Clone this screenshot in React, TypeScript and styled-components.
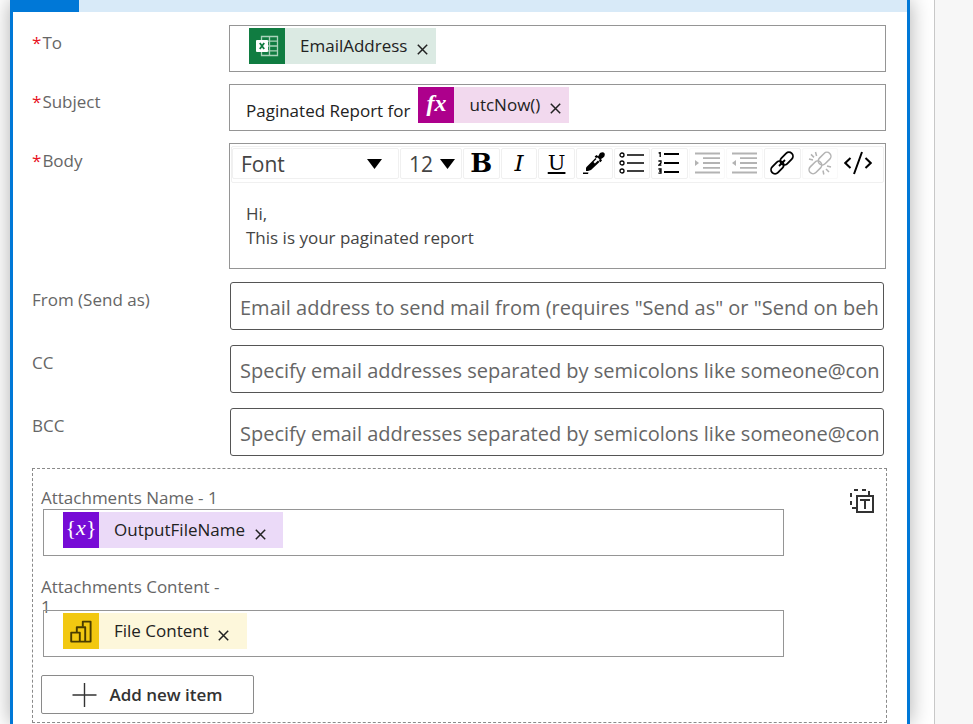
import React from "react";
import styled, { createGlobalStyle } from "styled-components";

const GlobalStyle = createGlobalStyle`
  *, *::before, *::after { box-sizing: border-box; }
  body {
    margin: 0;
    background: #ffffff;
    color: #333333;
    font-family: "Open Sans", "Noto Sans", sans-serif;
    font-size: 17px;
    line-height: 24px;
  }
  button, input, select { font: inherit; color: inherit; }
`;

const Page = styled.div`
  display: flex;
  min-height: 100vh;
  overflow: hidden;
`;

const Canvas = styled.main`
  flex: 1;
  min-width: 0;
  display: flex;
  padding: 0 24px 0 10px;
  overflow: hidden;
`;

const Gutter = styled.aside`
  width: 39px;
  flex-shrink: 0;
  background: #f7f7f7;
  border-left: 1px solid #c8c8c8;
`;

const Card = styled.form`
  flex: 1;
  min-width: 0;
  background: #ffffff;
  border: solid #0078d7;
  border-width: 0 3px;
  box-shadow: 0 0 20px rgba(0, 0, 0, 0.32);
`;

const CardHeader = styled.div`
  height: 12px;
  background: #d8eaf8;
`;

const HeaderAccent = styled.div`
  width: 66px;
  height: 100%;
  background: #0078d7;
`;

const CardBody = styled.div`
  display: flex;
  flex-direction: column;
  gap: 12px;
  padding: 13px 20px 0 19px;
`;

const Row = styled.div`
  display: grid;
  grid-template-columns: 197px minmax(0, 1fr);
  padding-right: 1px;
`;

const InputGroup = styled.div`
  display: flex;
  flex-direction: column;
  gap: 15px;
  padding: 1px 2px 0 0;
`;

const Label = styled.label`
  padding-top: 6px;
  color: #666666;
`;

const Required = styled.span`
  color: #e81123;
  margin-right: 1px;
`;

const TokenBox = styled.div`
  display: flex;
  align-items: flex-start;
  height: 47px;
  padding: 2px 16px;
  border: 1px solid #959595;
  background: #ffffff;
  color: #222222;
`;

const InlineText = styled.span`
  padding: 12px 5px 0 0;
  white-space: nowrap;
`;

const TokenPill = styled.span<{ $tint: string }>`
  display: inline-flex;
  align-items: center;
  height: 36px;
  margin-left: 3px;
  padding-right: 7px;
  background: ${(p) => p.$tint};
  white-space: nowrap;
`;

const TokenIcon = styled.span<{ $color: string }>`
  display: flex;
  align-items: center;
  justify-content: center;
  width: 36px;
  height: 36px;
  margin-right: 15px;
  background: ${(p) => p.$color};
  color: #ffffff;
`;

const IconText = styled.span<{ $bold?: boolean }>`
  font-family: "Liberation Serif", serif;
  font-style: italic;
  font-weight: ${(p) => (p.$bold ? 700 : 400)};
  font-size: ${(p) => (p.$bold ? 24 : 22)}px;
  line-height: 32px;
  padding-bottom: 4px;
`;

const Brace = styled.span`
  font-style: normal;
`;

const RemoveButton = styled.button`
  display: flex;
  align-items: center;
  justify-content: center;
  width: 14px;
  height: 14px;
  margin: 6px 0 0 8px;
  padding: 0;
  border: 0;
  background: none;
`;

const Editor = styled.div`
  height: 126px;
  padding: 2px 1px 0 1px;
  border: 1px solid #959595;
`;

const Toolbar = styled.div`
  display: flex;
  height: 37px;
  padding: 1px 7px 3px 0;
  border: 1px solid #f0f0f0;
  border-radius: 2px;
`;

const SelectWrap = styled.div<{ $width: number; $caretRight: number }>`
  position: relative;
  width: ${(p) => p.$width}px;
  margin-right: 1px;
  flex-shrink: 0;

  svg {
    position: absolute;
    right: ${(p) => p.$caretRight}px;
    top: 11px;
    pointer-events: none;
  }
`;

const Select = styled.select`
  appearance: none;
  width: 100%;
  height: 31px;
  padding: 0 0 0 8px;
  border: 1px solid #f0f0f0;
  border-radius: 2px;
  background: #ffffff;
  color: #444444;
  font-size: 21px;
  line-height: 28px;
`;

const ToolGrid = styled.div`
  flex: 1;
  display: grid;
  grid-template-columns: repeat(11, minmax(0, 1fr));
  column-gap: 1px;
`;

const Tool = styled.button<{ $plain?: boolean }>`
  display: flex;
  align-items: center;
  justify-content: center;
  height: 31px;
  padding: 0 0 2px;
  border: 1px solid ${(p) => (p.$plain ? "transparent" : "#f0f0f0")};
  border-radius: 2px;
  background: #ffffff;
  color: #000000;

  &:disabled {
    color: #b3b3b3;
    border-color: #f9f9f9;
  }
`;

const Glyph = styled.span<{ $kind: "bold" | "italic" | "underline" }>`
  font-family: "DejaVu Serif", serif;
  font-size: ${(p) => (p.$kind === "bold" ? 26 : p.$kind === "italic" ? 23 : 21)}px;
  line-height: 28px;
  font-weight: ${(p) => (p.$kind === "bold" ? 700 : 400)};
  font-style: ${(p) => (p.$kind === "italic" ? "italic" : "normal")};
  text-decoration: ${(p) => (p.$kind === "underline" ? "underline" : "none")};
`;

const EditorText = styled.div`
  padding: 19px 15px 0;
  color: #444444;

  p { margin: 0; }
`;

const TextInput = styled.input`
  width: 100%;
  height: 48px;
  padding: 3px 0 0 9px;
  border: 1px solid #555555;
  border-radius: 3px;
  background: #ffffff;
  font-size: 20px;

  &::placeholder { color: #666666; opacity: 1; }
`;

const InputCell = styled.div`
  padding-left: 1px;
`;

const Attachments = styled.section`
  display: grid;
  grid-template-columns: minmax(0, 743px) 1fr;
  padding: 19px 12px 8px 8px;
  border: 1px dashed #8a8a8a;
  color: #666666;
`;

const AttachmentFields = styled.div`
  display: flex;
  flex-direction: column;
  align-items: flex-start;
`;

const AttachmentField = styled.div<{ $labelHeight: number }>`
  display: grid;
  grid-template-rows: ${(p) => p.$labelHeight}px auto;
  width: 100%;

  & + & { margin-top: 21px; }

  ${TokenBox} {
    margin-left: 2px;
    background: transparent;
  }
  ${TokenPill} { padding-right: 16px; }
  ${RemoveButton} { margin-top: 9px; }
`;

const AttachmentLabel = styled.span`
  max-width: 190px;
  line-height: 20px;
`;

const AddButton = styled.button`
  display: flex;
  align-items: center;
  justify-content: center;
  gap: 12px;
  width: 213px;
  height: 39px;
  margin-top: 18px;
  padding: 1px 0 0;
  border: 1px solid #8a8a8a;
  border-radius: 2px;
  background: #ffffff;
  color: #333333;
  font-weight: 600;
`;

const ModeButton = styled.button`
  justify-self: end;
  align-self: start;
  display: flex;
  margin-top: 1px;
  padding: 0;
  border: 0;
  background: none;
`;

const Caret = () => (
  <svg width="15" height="10" viewBox="0 0 15 10" aria-hidden="true">
    <path d="M0 0H15L7.5 10Z" fill="#000" />
  </svg>
);

const ExcelIcon = () => (
  <svg width="24" height="22" viewBox="0 0 24 22" aria-hidden="true">
    <path
      d="M6.5 1.5H22.5V20.5H6.5ZM14.5 1.5V20.5M6.5 6.2H22.5M6.5 11H22.5M6.5 15.8H22.5"
      fill="none"
      stroke="#a9d3ba"
      strokeWidth="1.3"
    />
    <rect x="1" y="5" width="12" height="12" rx="1" fill="#fff" />
    <path d="M4.8 8L9.2 14M9.2 8L4.8 14" stroke="#107c41" strokeWidth="1.8" />
  </svg>
);

const PowerBiIcon = () => (
  <svg width="22" height="23" viewBox="0 0 22 23" aria-hidden="true">
    <g fill="none" stroke="#4a3c00" strokeWidth="1.9" strokeLinejoin="round">
      <path d="M12.8 6.8V1.6H20.6V21.6H1.2V12.6H9.8V21.6" />
      <path d="M6.8 12.6V7.2H15.2V21.6" />
    </g>
  </svg>
);

const Cross = () => (
  <svg width="11" height="11" viewBox="0 0 11 11" aria-hidden="true">
    <path d="M0.8 0.8L10.2 10.2M10.2 0.8L0.8 10.2" stroke="#222" strokeWidth="1.5" />
  </svg>
);

const PickerIcon = () => (
  <svg width="22" height="22" viewBox="0 0 22 22" aria-hidden="true">
    <path d="M0 22V20.4H5.5L5 22Z" fill="currentColor" />
    <path d="M3 19V15.5L12.5 6L16.5 10L8 18L5 19Z" fill="currentColor" />
    <path d="M11.2 10.8L15 7" stroke="#fff" strokeWidth="2" />
    <path d="M11.6 4.6L13.5 3L15.2 4.2L17 1Q20 -0.8 21.5 1.2Q22.5 3.8 20 5.8L18 7L19 8.6L17.4 10.2L16 9L16.6 7.4L14.6 5.4L13 6Z" fill="currentColor" />
  </svg>
);

const BulletsIcon = () => (
  <svg width="25" height="22" viewBox="0 0 25 22" aria-hidden="true">
    <g fill="none" stroke="currentColor" strokeWidth="1.3">
      <circle cx="3" cy="3" r="2" />
      <circle cx="3" cy="11" r="2" />
      <circle cx="3" cy="19" r="2" />
      <path d="M8 3H25M8 11H25M8 19H25" />
    </g>
  </svg>
);

const NumbersIcon = () => (
  <svg width="22" height="22" viewBox="0 0 22 22" aria-hidden="true">
    <path d="M6 2H21M6 11H21M6 20H21" stroke="currentColor" strokeWidth="2" />
    <g fill="none" stroke="currentColor" strokeWidth="1.3">
      <path d="M0.6 1.2L2.2 0.6V5" />
      <path d="M0.4 9H3V11L0.8 13.2H3.4" />
      <path d="M0.4 17H3V21.2H0.4M1 19H3" />
    </g>
  </svg>
);

const IndentIcon = ({ out }: { out?: boolean }) => (
  <svg width="25" height="22" viewBox="0 0 25 22" aria-hidden="true">
    <path d="M0 1.5H25M8 6.2H25M8 11H25M8 15.8H25M0 20.5H25" stroke="currentColor" strokeWidth="1.8" />
    <path d={out ? "M4 8V14L0 11Z" : "M0 8V14L4 11Z"} fill="currentColor" />
  </svg>
);

const LinkIcon = ({ broken }: { broken?: boolean }) => (
  <svg width="24" height="24" viewBox="0 0 24 24" aria-hidden="true">
    <g fill="none" stroke="currentColor" strokeWidth={broken ? 1.5 : 1.8}>
      <rect x="-7.3" y="-4" width="14.6" height="8" rx="4" transform="translate(16.6 7.6) rotate(-45)" />
      <rect x="-7.3" y="-4" width="14.6" height="8" rx="4" transform="translate(7.4 16.4) rotate(-45)" />
      {broken ? (
        <path d="M7.5 1L8.6 5M3 3.4L6 6.4M1 8L5 9M15 19.5L15.8 23.5M18 18L21 21M19 15L23 16" />
      ) : (
        <path d="M9 15L15 9" />
      )}
    </g>
  </svg>
);

const CodeIcon = () => (
  <svg width="28" height="24" viewBox="0 0 28 24" aria-hidden="true">
    <path
      d="M6.5 7L1.3 12L6.5 17M21.5 7L26.7 12L21.5 17M18 1L10 23"
      fill="none"
      stroke="currentColor"
      strokeWidth="2"
    />
  </svg>
);

const PlusIcon = () => (
  <svg width="25" height="24" viewBox="0 0 25 24" aria-hidden="true">
    <path d="M12.5 0V24M0.5 12H24.5" stroke="#333" strokeWidth="1.4" />
  </svg>
);

const ModeIcon = () => (
  <svg width="24" height="24" viewBox="0 0 24 24" aria-hidden="true">
    <path d="M4 0h4v2H4zM12 0h4v2h-4zM18 2h2v4h-2zM0 4h2v4H0zM0 12h2v4H0zM2 18h4v2H2z" fill="#333" />
    <path d="M10 10h10v2h-4v8h-2v-8h-4z" fill="#333" />
    <rect x="7" y="7" width="16" height="16" fill="none" stroke="#333" strokeWidth="2" />
  </svg>
);

interface TokenProps {
  name: string;
  color: string;
  tint: string;
  icon: React.ReactNode;
}

const Token = ({ name, color, tint, icon }: TokenProps) => (
  <TokenPill $tint={tint}>
    <TokenIcon $color={color}>{icon}</TokenIcon>
    {name}
    <RemoveButton type="button" aria-label={`Remove ${name}`}>
      <Cross />
    </RemoveButton>
  </TokenPill>
);

const VariableIcon = () => (
  <IconText>
    <Brace>{"{"}</Brace>x<Brace>{"}"}</Brace>
  </IconText>
);

const emailHint = "Specify email addresses separated by semicolons like someone@con";

const textFields = [
  { id: "from", label: "From (Send as)", hint: 'Email address to send mail from (requires "Send as" or "Send on beh' },
  { id: "cc", label: "CC", hint: emailHint },
  { id: "bcc", label: "BCC", hint: emailHint },
];

export default function App() {
  return (
    <>
      <GlobalStyle />
      <Page>
        <Canvas>
          <Card onSubmit={(e) => e.preventDefault()}>
            <CardHeader>
              <HeaderAccent />
            </CardHeader>
            <CardBody>
              <Row>
                <Label as="span" id="to-label">
                  <Required>*</Required>To
                </Label>
                <TokenBox role="textbox" aria-labelledby="to-label" tabIndex={0}>
                  <Token name="EmailAddress" color="#107c41" tint="#dbeae3" icon={<ExcelIcon />} />
                </TokenBox>
              </Row>
              <Row>
                <Label as="span" id="subject-label">
                  <Required>*</Required>Subject
                </Label>
                <TokenBox role="textbox" aria-labelledby="subject-label" tabIndex={0}>
                  <InlineText>Paginated Report for</InlineText>
                  <Token name="utcNow()" color="#ad008c" tint="#f2d9ee" icon={<IconText $bold>fx</IconText>} />
                </TokenBox>
              </Row>
              <Row>
                <Label as="span" id="body-label">
                  <Required>*</Required>Body
                </Label>
                <Editor>
                  <Toolbar role="toolbar" aria-label="Formatting">
                    <SelectWrap $width={167} $caretRight={17}>
                      <Select aria-label="Font family">
                        <option>Font</option>
                      </Select>
                      <Caret />
                    </SelectWrap>
                    <SelectWrap $width={62} $caretRight={7}>
                      <Select aria-label="Font size">
                        <option>12</option>
                      </Select>
                      <Caret />
                    </SelectWrap>
                    <ToolGrid>
                      <Tool type="button" aria-label="Bold"><Glyph $kind="bold">B</Glyph></Tool>
                      <Tool type="button" aria-label="Italic"><Glyph $kind="italic">I</Glyph></Tool>
                      <Tool type="button" aria-label="Underline"><Glyph $kind="underline">U</Glyph></Tool>
                      <Tool type="button" aria-label="Text color"><PickerIcon /></Tool>
                      <Tool type="button" aria-label="Bulleted list"><BulletsIcon /></Tool>
                      <Tool type="button" aria-label="Numbered list"><NumbersIcon /></Tool>
                      <Tool type="button" aria-label="Indent" disabled><IndentIcon /></Tool>
                      <Tool type="button" aria-label="Outdent" disabled><IndentIcon out /></Tool>
                      <Tool type="button" aria-label="Link"><LinkIcon /></Tool>
                      <Tool type="button" aria-label="Unlink" disabled><LinkIcon broken /></Tool>
                      <Tool type="button" aria-label="Code view" $plain><CodeIcon /></Tool>
                    </ToolGrid>
                  </Toolbar>
                  <EditorText role="textbox" aria-multiline="true" aria-labelledby="body-label" tabIndex={0}>
                    <p>Hi,</p>
                    <p>This is your paginated report</p>
                  </EditorText>
                </Editor>
              </Row>
              <InputGroup>
                {textFields.map((f) => (
                  <Row key={f.id}>
                    <Label htmlFor={f.id}>{f.label}</Label>
                    <InputCell>
                      <TextInput id={f.id} type="text" placeholder={f.hint} />
                    </InputCell>
                  </Row>
                ))}
              </InputGroup>
              <Attachments>
                <AttachmentFields>
                  <AttachmentField $labelHeight={21}>
                    <AttachmentLabel id="att-name">Attachments Name - 1</AttachmentLabel>
                    <TokenBox role="textbox" aria-labelledby="att-name" tabIndex={0}>
                      <Token name="OutputFileName" color="#770bd6" tint="#ebdaf8" icon={<VariableIcon />} />
                    </TokenBox>
                  </AttachmentField>
                  <AttachmentField $labelHeight={33}>
                    <AttachmentLabel id="att-content">Attachments Content - 1</AttachmentLabel>
                    <TokenBox role="textbox" aria-labelledby="att-content" tabIndex={0}>
                      <Token name="File Content" color="#f2c811" tint="#fdf7db" icon={<PowerBiIcon />} />
                    </TokenBox>
                  </AttachmentField>
                  <AddButton type="button">
                    <PlusIcon />
                    Add new item
                  </AddButton>
                </AttachmentFields>
                <ModeButton type="button" aria-label="Switch to input entire array">
                  <ModeIcon />
                </ModeButton>
              </Attachments>
            </CardBody>
          </Card>
        </Canvas>
        <Gutter />
      </Page>
    </>
  );
}
